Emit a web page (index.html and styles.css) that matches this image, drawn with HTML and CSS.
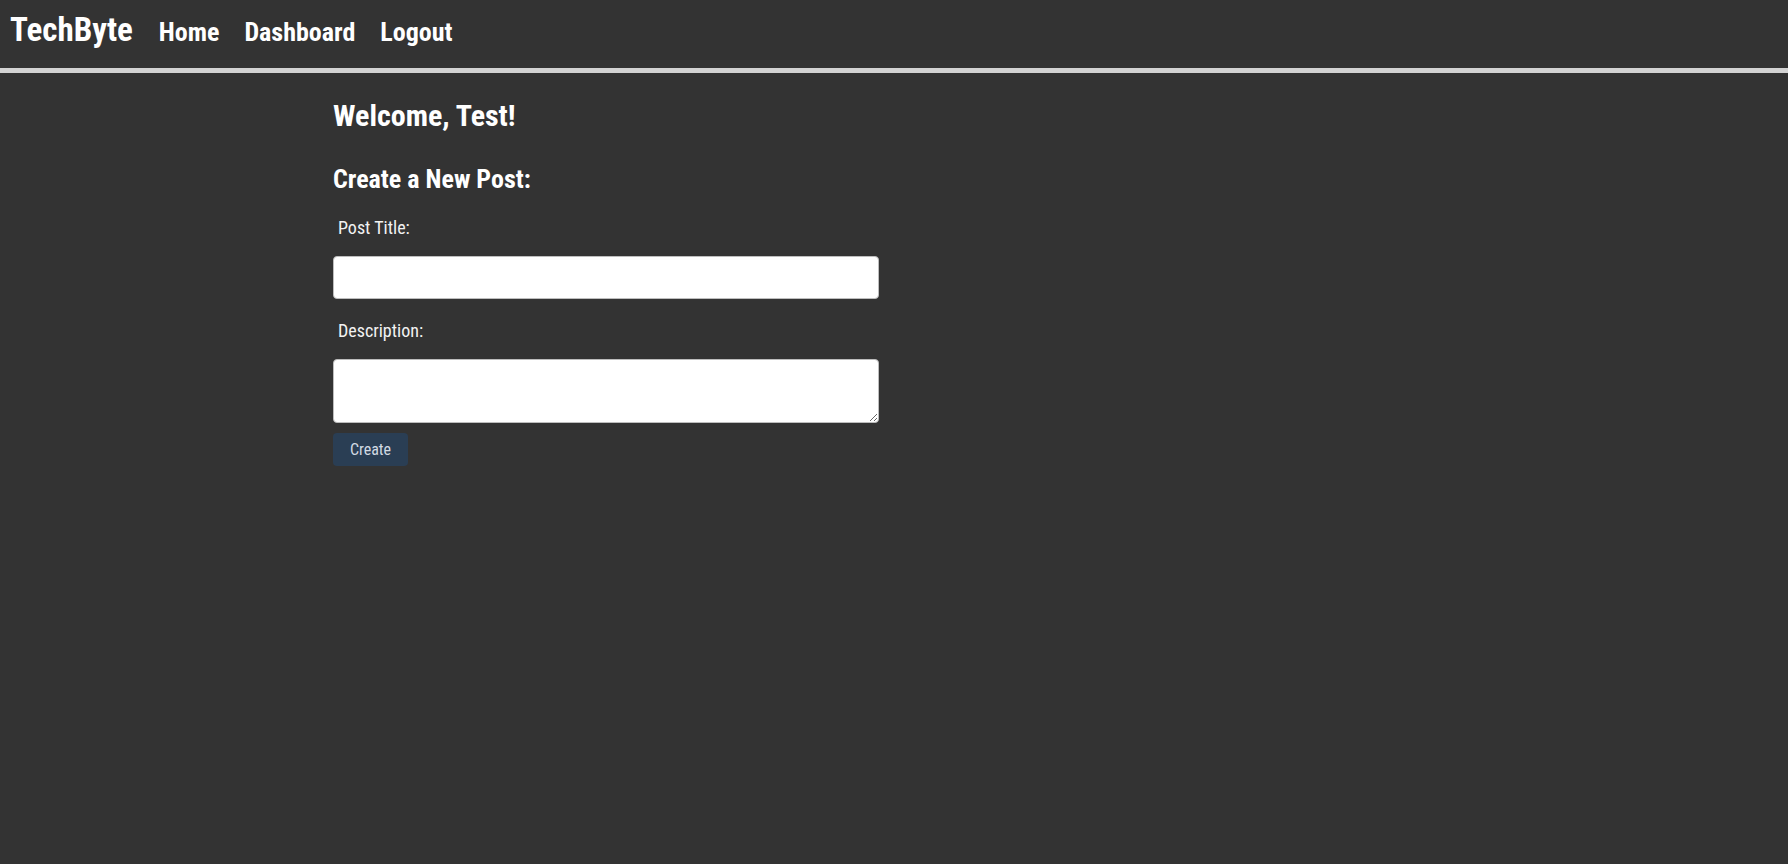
FILE: index.html
```html
<!DOCTYPE html>
<html lang="en">
<head>
<meta charset="utf-8">
<title>TechByte - Dashboard</title>
<link rel="stylesheet" href="styles.css">
</head>
<body>
<header class="topbar">
  <a class="brand" href="#">TechByte</a>
  <nav class="nav">
    <a class="nav-link" href="#">Home</a>
    <a class="nav-link" href="#">Dashboard</a>
    <a class="nav-link" href="#">Logout</a>
  </nav>
</header>
<main class="content">
  <h1 class="welcome">Welcome, Test!</h1>
  <h2 class="section-title">Create a New Post:</h2>
  <form class="post-form">
    <label class="field-label" for="title">Post Title:</label>
    <input class="field-input" id="title" type="text">
    <label class="field-label field-label-next" for="desc">Description:</label>
    <textarea class="field-textarea" id="desc"></textarea>
    <button class="btn" type="button">Create</button>
  </form>
</main>
</body>
</html>
```
FILE: styles.css
```css
html, body {
  margin: 0;
  padding: 0;
  background: #333333;
  color: #ffffff;
  font-family: Roboto, "Noto Sans", sans-serif;
  font-stretch: condensed;
}
.topbar {
  display: flex;
  align-items: baseline;
  box-sizing: border-box;
  height: 73px;
  padding: 0 10px;
  border-bottom: 5px solid #d3d3d3;
  gap: 26px;
}
.brand {
  font-size: 33px;
  font-weight: 700;
  line-height: 38px;
  padding-top: 11px;
  color: #ffffff;
  text-decoration: none;
}
.nav {
  display: flex;
  gap: 25px;
}
.nav-link {
  font-size: 26px;
  font-weight: 700;
  color: #ffffff;
  text-decoration: none;
}
.content {
  padding-left: 333px;
  width: 546px;
}
.welcome {
  margin: 25px 0 0;
  font-size: 30px;
  line-height: 36px;
  font-weight: 700;
}
.section-title {
  margin: 29px 0 0;
  font-size: 26px;
  line-height: 32px;
  font-weight: 700;
}
.post-form {
  display: flex;
  flex-direction: column;
}
.field-label {
  font-size: 18px;
  line-height: 22px;
  padding-left: 5px;
  margin: 22px 0 17px;
  color: #f2f2f2;
}
.field-label-next {
  margin-top: 21px;
}
.field-input, .field-textarea {
  box-sizing: border-box;
  width: 546px;
  border: 1px solid #bdbdbd;
  border-radius: 4px;
  background: #ffffff;
  font-family: inherit;
  font-size: 16px;
}
.field-input {
  height: 43px;
}
.field-textarea {
  height: 64px;
}
.btn {
  align-self: flex-start;
  margin-top: 10px;
  width: 75px;
  height: 33px;
  border: none;
  border-radius: 4px;
  background: #2a3e54;
  color: #d2dae3;
  font-family: inherit;
  font-stretch: condensed;
  font-size: 16px;
}
```
